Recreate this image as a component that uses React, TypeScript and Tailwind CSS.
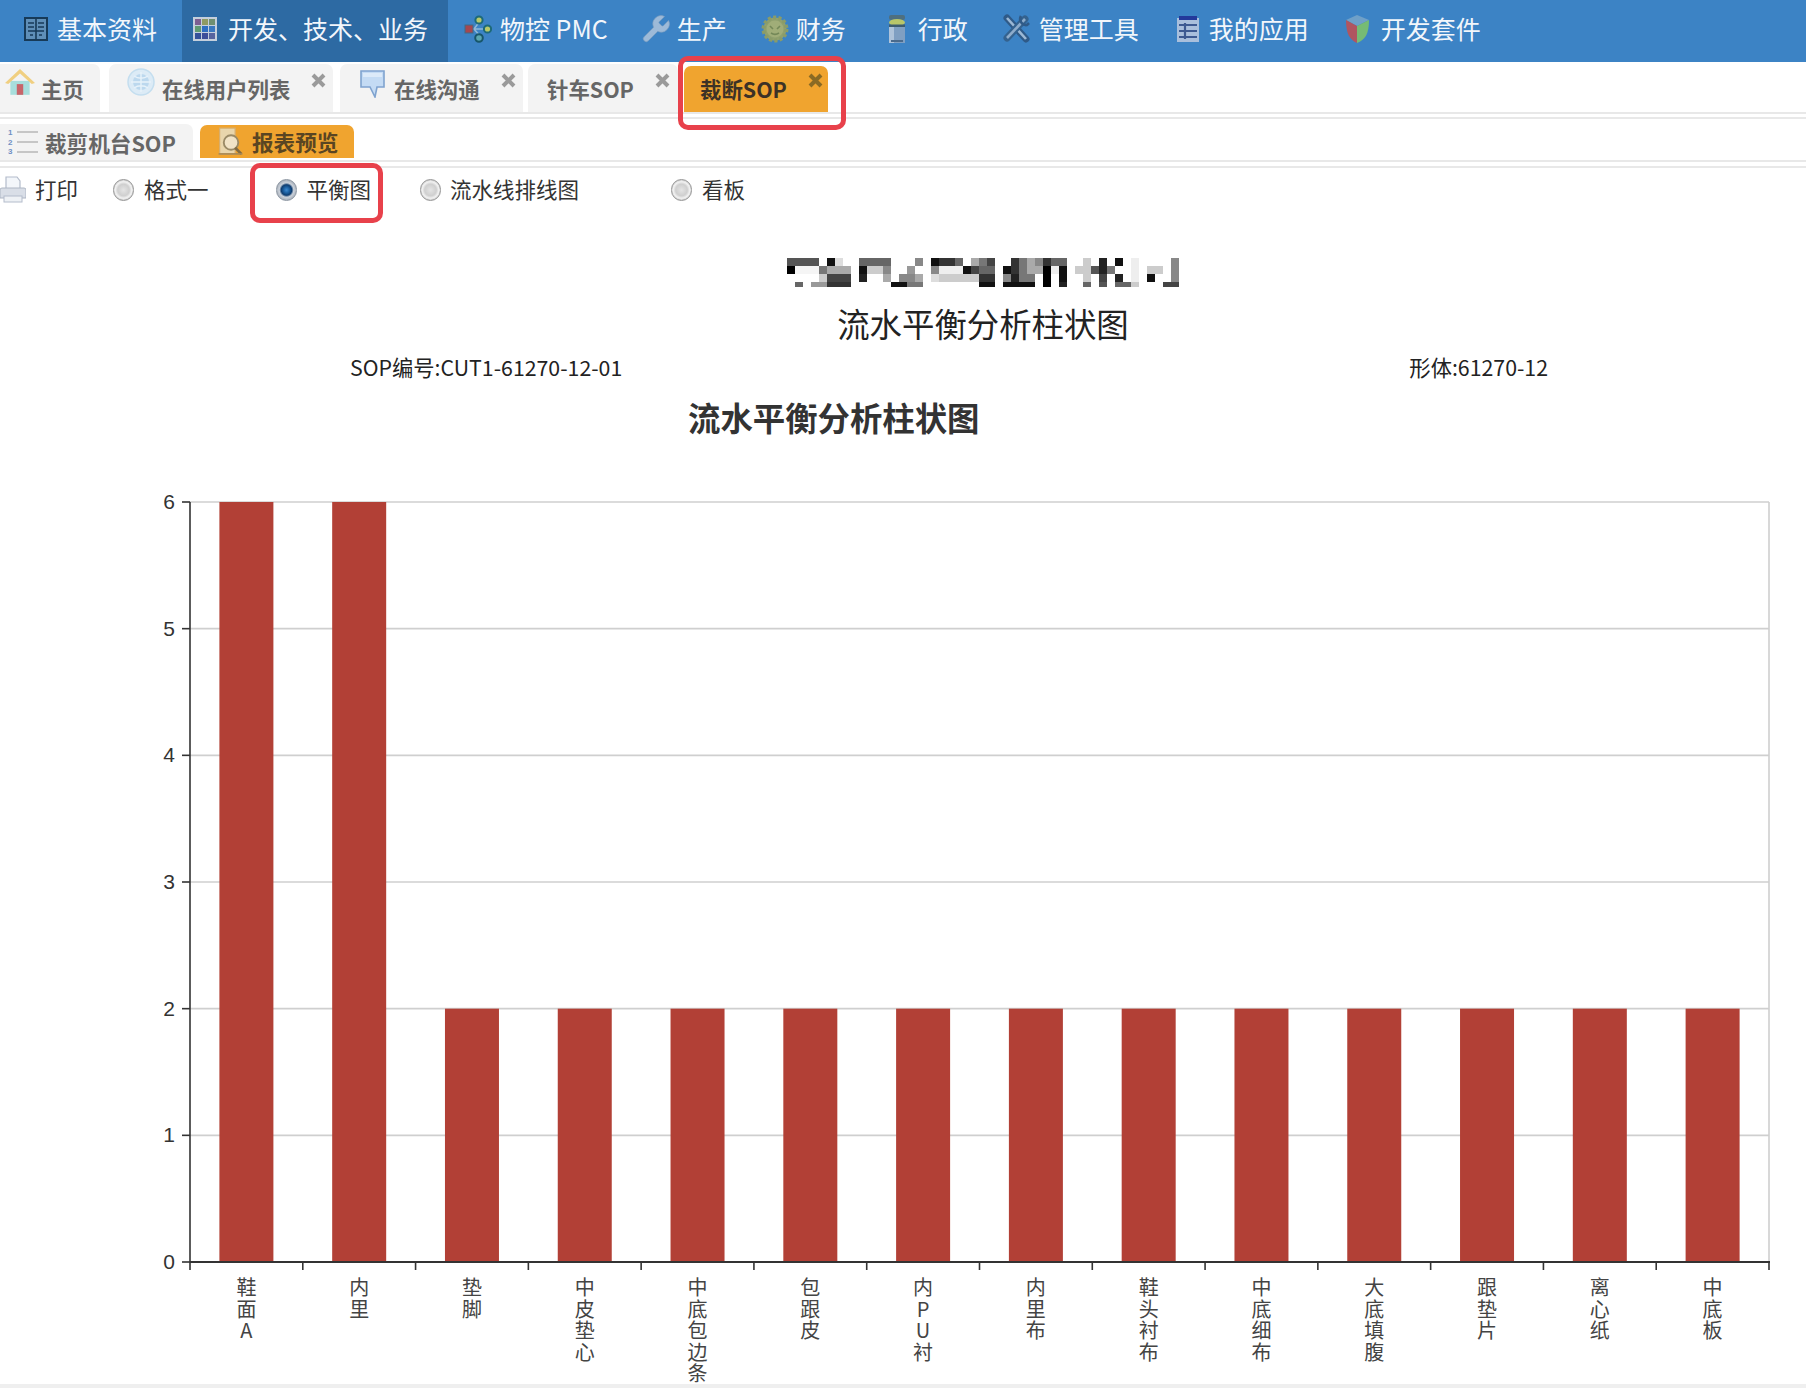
import type { ReactNode } from "react";

const BookIcon = () => (
  <svg width="24" height="24" viewBox="0 0 24 24">
    <rect x="1" y="1" width="22" height="22" fill="#5f8fb8" stroke="#173a58" strokeWidth="2" />
    <path d="M12 2v20M4 6h6M14 6h6M4 10h6M14 10h6M4 14h16M6 18h3M15 18h3" stroke="#173a58" strokeWidth="1.6" />
  </svg>
);

const GridIcon = () => {
  const cells = ["#7c5f92", "#8f9a62", "#6f8f72", "#5f9a72", "#2f6fc0", "#3a78c0", "#34509a", "#3d4f9a", "#56649f"];
  return (
    <svg width="24" height="24" viewBox="0 0 24 24">
      <rect x="0" y="0" width="24" height="24" fill="#c4cfdc" />
      {cells.map((c, i) => (
        <rect key={i} x={2 + (i % 3) * 7} y={2 + Math.floor(i / 3) * 7} width="6" height="6" fill={c} />
      ))}
    </svg>
  );
};

const NodesIcon = () => (
  <svg width="28" height="28" viewBox="0 0 28 28">
    <path d="M7 14h14M10 14l6-8M10 14l7 8" stroke="#8fb9d8" strokeWidth="1.5" fill="none" />
    <rect x="1" y="10" width="8" height="8" fill="#a5474f" stroke="#406a86" />
    <circle cx="15" cy="5" r="3.6" fill="#b7c96a" stroke="#1d6a78" strokeWidth="2" />
    <circle cx="23.5" cy="14" r="3.6" fill="#b7c96a" stroke="#1d6a78" strokeWidth="2" />
    <circle cx="15" cy="23" r="3.8" fill="#5aa7b0" stroke="#17566a" strokeWidth="2" />
  </svg>
);

const WrenchIcon = () => (
  <svg width="28" height="28" viewBox="2 1.5 20.5 20.5">
    <path
      d="M14.7 6.3a1 1 0 0 0 0 1.4l1.6 1.6a1 1 0 0 0 1.4 0l3.77-3.77a6 6 0 0 1-7.94 7.94l-6.91 6.91a2.12 2.12 0 0 1-3-3l6.91-6.91a6 6 0 0 1 7.94-7.94l-3.76 3.76z"
      fill="#9dbad8"
      stroke="#7f9fc0"
      strokeWidth="0.5"
    />
  </svg>
);

const GearIcon = () => (
  <svg width="28" height="28" viewBox="0 0 28 28">
    <circle cx="14" cy="14" r="11.5" fill="#90a06e" stroke="#8a9c68" strokeWidth="4" strokeDasharray="3 2.2" />
    <circle cx="14" cy="14" r="8.5" fill="#a0ad78" />
    <path d="M9 11l3 3M19 11l-3 3M10 18c3 2 5 2 8 0" stroke="#748858" strokeWidth="1.6" fill="none" />
  </svg>
);

const DrumIcon = () => (
  <svg width="20" height="30" viewBox="0 0 20 30">
    <rect x="2" y="12" width="16" height="17" fill="#7f9fc2" />
    <rect x="2" y="12" width="5" height="17" fill="#aec3da" />
    <rect x="2" y="1" width="16" height="5" rx="2" fill="#4e6f80" />
    <ellipse cx="10" cy="8.5" rx="8" ry="3.5" fill="#b8c66a" />
    <rect x="2" y="10.5" width="16" height="2.5" fill="#3d5c70" />
    <rect x="4" y="26" width="12" height="2" fill="#4a6a8c" />
  </svg>
);

const ToolsIcon = () => (
  <svg width="29" height="29" viewBox="0 0 29 29" fill="none">
    <path d="M5 4l19 21" stroke="#2f5a88" strokeWidth="7" strokeLinecap="round" />
    <path d="M5 4l19 21" stroke="#9cb8d4" strokeWidth="2.6" />
    <path d="M23 5L5 24" stroke="#34628f" strokeWidth="7" strokeLinecap="round" />
    <path d="M23 5L5 24" stroke="#8eaccb" strokeWidth="2.6" />
    <path d="M19 2a6 6 0 0 0 6 9l2-2" stroke="#2f5a88" strokeWidth="2.6" />
  </svg>
);

const AppCardIcon = () => (
  <svg width="24" height="28" viewBox="0 0 24 28">
    <rect x="1" y="3" width="22" height="24" fill="#a9bfdc" />
    <rect x="3" y="1" width="18" height="4" fill="#23399b" />
    <path d="M3 10h18M3 16h18M3 22h18M9 8v16" stroke="#3d5a92" strokeWidth="2.2" />
  </svg>
);

const CubeIcon = () => (
  <svg width="27" height="30" viewBox="0 0 27 30">
    <path d="M2 6l11-5 12 5-12 6z" fill="#6fa0c8" />
    <path d="M2 6l11 6v17C6 26 2 20 2 6z" fill="#b05560" />
    <path d="M25 6l-12 6v17c8-3 12-9 12-23z" fill="#76bb74" />
  </svg>
);

const HomeIcon = () => (
  <svg width="30" height="27" viewBox="0 0 28 25">
    <path d="M5 11h18v13H5z" fill="#a8dedc" />
    <rect x="11" y="14" width="6" height="10" fill="#c8656a" />
    <path d="M0 13L14 0l14 13-3 1L14 4 3 14z" fill="#f0cf80" />
  </svg>
);

const GlobeIcon = () => (
  <svg width="28" height="28" viewBox="0 0 28 28" fill="none">
    <circle cx="14" cy="14" r="13" fill="#dcebf6" stroke="#c4deef" strokeWidth="1.5" />
    <circle cx="14" cy="14" r="8" fill="#bcd8ee" />
    <path d="M14 4v20M4 14h20M7 8c4 3 10 3 14 0M7 20c4-3 10-3 14 0" stroke="#e7f2fa" strokeWidth="1.4" />
  </svg>
);

const BubbleIcon = () => (
  <svg width="25" height="29" viewBox="0 0 25 29">
    <path d="M1 2h23v16h-7l-2 10-5-10H1z" fill="#c4dbf4" stroke="#7fa3cf" strokeWidth="1.6" />
    <path d="M3 4h19v4H3z" fill="#dceaf9" />
  </svg>
);

const ListIcon = () => (
  <svg width="30" height="30" viewBox="0 0 30 30">
    <text x="0" y="8" fontSize="8" fontWeight="700" fill="#6f8fc4" fontFamily="Liberation Sans, sans-serif">1</text>
    <text x="0" y="18" fontSize="8" fontWeight="700" fill="#6f8fc4" fontFamily="Liberation Sans, sans-serif">2</text>
    <text x="0" y="27" fontSize="8" fontWeight="700" fill="#6f8fc4" fontFamily="Liberation Sans, sans-serif">3</text>
    <path d="M9 5h21M9 15h21M9 25h21" stroke="#b8b8b8" strokeWidth="1.6" />
  </svg>
);

const ReportIcon = () => (
  <svg width="27" height="29" viewBox="0 0 25 28" fill="none">
    <path d="M2 1h15v25H2z" fill="#e9d6ac" stroke="#d8ae6c" strokeWidth="1.2" />
    <circle cx="13" cy="15" r="7" fill="#f1e3c6" stroke="#9a8a66" strokeWidth="1.8" />
    <path d="M17 20l6 6" stroke="#806a42" strokeWidth="2.6" />
    <path d="M1 26h23" stroke="#a88a56" strokeWidth="1.6" />
  </svg>
);

const PrinterIcon = () => (
  <svg width="26" height="27" viewBox="0 0 26 27">
    <path d="M6 1h11l3 4v8H6z" fill="#f3f6fa" stroke="#b4bccb" strokeWidth="1.2" />
    <path d="M2 12h22a2 2 0 0 1 2 2v8H0v-8a2 2 0 0 1 2-2z" fill="#d9dee7" stroke="#aeb6c4" />
    <rect x="4" y="20" width="18" height="6" fill="#eef1f5" stroke="#b4bccb" />
  </svg>
);

const CloseMark = ({ color = "#9a9a9a" }: { color?: string }) => (
  <svg width="15" height="15" viewBox="0 0 15 15">
    <path d="M2 2l11 11M13 2L2 13" stroke={color} strokeWidth="4" />
  </svg>
);

const navItems: { label: string; icon: ReactNode; cls: string }[] = [
  { label: "基本资料", icon: <BookIcon />, cls: "ml-[24px] gap-[9px]" },
  { label: "开发、技术、业务", icon: <GridIcon />, cls: "ml-[25px] w-[266px] pl-[11px] gap-[11px] bg-[#2d6aa3]" },
  { label: "物控 PMC", icon: <NodesIcon />, cls: "ml-[16px] gap-[8px]" },
  { label: "生产", icon: <WrenchIcon />, cls: "ml-[34px] gap-[7px]" },
  { label: "财务", icon: <GearIcon />, cls: "ml-[34px] gap-[7px]" },
  { label: "行政", icon: <DrumIcon />, cls: "ml-[41px] gap-[11px]" },
  { label: "管理工具", icon: <ToolsIcon />, cls: "ml-[34px] gap-[8px]" },
  { label: "我的应用", icon: <AppCardIcon />, cls: "ml-[37px] gap-[9px]" },
  { label: "开发套件", icon: <CubeIcon />, cls: "ml-[35px] gap-[10px]" },
];

const mosaic: [number, number, number, string][] = [
  [0, 24, 120, "#555"], [0, 144, 168, "#111"], [0, 168, 192, "#ddd"], [0, 240, 336, "#666"], [0, 408, 432, "#888"],
  [0, 456, 480, "#111"], [0, 480, 528, "#333"], [0, 528, 552, "#666"], [0, 576, 600, "#aaa"], [0, 600, 624, "#777"],
  [0, 624, 648, "#444"], [0, 696, 720, "#333"], [0, 720, 744, "#777"], [0, 744, 768, "#aaa"], [0, 768, 792, "#888"],
  [0, 792, 816, "#333"], [0, 816, 864, "#666"], [0, 912, 936, "#ccc"], [0, 960, 984, "#222"], [0, 1008, 1032, "#111"],
  [0, 1056, 1080, "#eee"], [0, 1176, 1200, "#888"],
  [1, 24, 48, "#000"], [1, 48, 120, "#f5f5f5"], [1, 120, 144, "#777"], [1, 144, 216, "#aaa"], [1, 240, 264, "#111"],
  [1, 264, 312, "#ccc"], [1, 312, 336, "#888"], [1, 384, 408, "#999"], [1, 456, 480, "#888"], [1, 480, 552, "#eee"],
  [1, 552, 576, "#111"], [1, 576, 600, "#444"], [1, 600, 648, "#666"], [1, 672, 696, "#111"], [1, 696, 720, "#333"],
  [1, 720, 744, "#777"], [1, 744, 792, "#aaa"], [1, 792, 816, "#000"], [1, 816, 840, "#eee"], [1, 840, 864, "#111"],
  [1, 888, 936, "#ccc"], [1, 936, 960, "#555"], [1, 960, 984, "#222"], [1, 984, 1008, "#777"], [1, 1056, 1080, "#eee"],
  [1, 1104, 1152, "#ccc"], [1, 1176, 1200, "#888"],
  [2, 120, 144, "#ccc"], [2, 144, 216, "#444"], [2, 240, 264, "#222"], [2, 312, 336, "#aaa"], [2, 360, 408, "#888"],
  [2, 408, 432, "#aaa"], [2, 456, 480, "#ddd"], [2, 480, 600, "#ccc"], [2, 600, 648, "#333"], [2, 672, 696, "#888"],
  [2, 696, 720, "#222"], [2, 720, 768, "#777"], [2, 792, 816, "#000"], [2, 840, 864, "#111"], [2, 912, 936, "#ccc"],
  [2, 960, 984, "#444"], [2, 1008, 1032, "#222"], [2, 1056, 1080, "#eee"], [2, 1104, 1128, "#111"], [2, 1176, 1200, "#888"],
  [3, 48, 72, "#666"], [3, 96, 144, "#999"], [3, 144, 216, "#333"], [3, 336, 384, "#111"], [3, 384, 432, "#777"],
  [3, 600, 648, "#111"], [3, 672, 768, "#111"], [3, 792, 816, "#000"], [3, 840, 864, "#222"], [3, 912, 936, "#666"],
  [3, 960, 984, "#555"], [3, 1008, 1056, "#666"], [3, 1056, 1080, "#ccc"], [3, 1152, 1200, "#444"],
];

const chartData: { name: string; value: number }[] = [
  { name: "鞋面A", value: 6 },
  { name: "内里", value: 6 },
  { name: "垫脚", value: 2 },
  { name: "中皮垫心", value: 2 },
  { name: "中底包边条", value: 2 },
  { name: "包跟皮", value: 2 },
  { name: "内PU衬", value: 2 },
  { name: "内里布", value: 2 },
  { name: "鞋头衬布", value: 2 },
  { name: "中底细布", value: 2 },
  { name: "大底填腹", value: 2 },
  { name: "跟垫片", value: 2 },
  { name: "离心纸", value: 2 },
  { name: "中底板", value: 2 },
];

function BalanceChart() {
  const left = 190;
  const right = 1769;
  const top = 502;
  const bottom = 1262;
  const step = (right - left) / chartData.length;
  const unit = (bottom - top) / 6;

  return (
    <svg width="1806" height="830" viewBox="0 442 1806 830" className="block shrink-0">
      {[1, 2, 3, 4, 5, 6].map((v) => (
        <line key={v} x1={left} x2={right} y1={bottom - v * unit} y2={bottom - v * unit} stroke="#cfcfcf" strokeWidth="1.6" />
      ))}
      <line x1={right} x2={right} y1={top} y2={bottom} stroke="#cfcfcf" strokeWidth="1.6" />
      {chartData.map((d, i) => (
        <rect key={d.name} x={left + step * (i + 0.5) - 27} y={bottom - d.value * unit} width="54" height={d.value * unit} fill="#b24036" />
      ))}
      <line x1={left} x2={left} y1={top} y2={bottom + 8} stroke="#333" strokeWidth="1.6" />
      <line x1={left} x2={right + 1} y1={bottom} y2={bottom} stroke="#333" strokeWidth="2" />
      {[0, 1, 2, 3, 4, 5, 6].map((v) => (
        <g key={v}>
          <line x1={left - 8} x2={left} y1={bottom - v * unit} y2={bottom - v * unit} stroke="#333" strokeWidth="1.6" />
          <text x={175} y={bottom - v * unit + 7} textAnchor="end" fontSize="21" fill="#333" fontFamily="Liberation Sans, sans-serif">
            {v}
          </text>
        </g>
      ))}
      {chartData.map((_, i) => (
        <line key={i} x1={left + step * (i + 1)} x2={left + step * (i + 1)} y1={bottom} y2={bottom + 8} stroke="#333" strokeWidth="1.6" />
      ))}
    </svg>
  );
}

const Radio = ({ checked = false }: { checked?: boolean }) => (
  <span
    className={
      checked
        ? "block w-[21px] h-[22px] rounded-full border border-[#8a94a0] bg-[radial-gradient(circle,#3e8ad0_0%,#1c5f9f_22%,#0f3d70_38%,#ccd2da_52%,#8a94a0_92%)]"
        : "block w-[21px] h-[22px] rounded-full border border-[#959595] bg-[radial-gradient(circle,#e4e4e4_0%,#cfcfcf_42%,#f2f2f2_60%,#979797_95%)]"
    }
  />
);

export default function App() {
  return (
    <div className="relative flex flex-col w-[1806px] h-[1388px] overflow-hidden bg-white text-[#333] font-['Noto_Sans_CJK_SC','Noto_Sans',sans-serif]">
      <div className="flex h-[62px] shrink-0 bg-[#3c83c5] text-[25px] text-[#f2f6fb]">
        {navItems.map((item) => (
          <div key={item.label} className={`flex items-center h-full pb-[5px] whitespace-nowrap ${item.cls}`}>
            {item.icon}
            <span>{item.label}</span>
          </div>
        ))}
      </div>

      <div className="flex h-[50px] shrink-0 text-[21.4px] font-bold text-[#666]">
        <div className="flex items-center mt-[2px] w-[100px] rounded-tr-[7px] bg-[#f3f3f3] pl-[5px] gap-[6px]">
          <span className="-mt-[12px]"><HomeIcon /></span>
          <span className="mt-[3px]">主页</span>
        </div>
        <div className="relative flex items-center mt-[2px] ml-[9px] w-[224px] rounded-t-[7px] bg-[#f3f3f3] pl-[18px] gap-[7px]">
          <span className="-mt-[12px]"><GlobeIcon /></span>
          <span className="mt-[2px]">在线用户列表</span>
          <span className="absolute top-[9px] right-[7px]"><CloseMark /></span>
        </div>
        <div className="relative flex items-center mt-[2px] ml-[7px] w-[183px] rounded-t-[7px] bg-[#f3f3f3] pl-[20px] gap-[9px]">
          <span className="-mt-[10px]"><BubbleIcon /></span>
          <span className="mt-[2px]">在线沟通</span>
          <span className="absolute top-[9px] right-[7px]"><CloseMark /></span>
        </div>
        <div className="relative flex items-center mt-[2px] ml-[5px] w-[150px] rounded-t-[7px] bg-[#f3f3f3] pl-[19px]">
          <span className="mt-[2px]">针车SOP</span>
          <span className="absolute top-[9px] right-[8px]"><CloseMark /></span>
        </div>
        <div className="relative flex items-center mt-[4px] ml-[6px] w-[144px] rounded-t-[7px] bg-[#f0a42f] pl-[16px] text-[#3d3226]">
          <span>裁断SOP</span>
          <span className="absolute top-[7px] right-[5px]"><CloseMark color="#8a6a24" /></span>
        </div>
      </div>
      <div className="h-[2px] shrink-0 bg-[#e8e8e8]" />
      <div className="h-[3px] shrink-0" />
      <div className="h-[2px] shrink-0 bg-[#e8e8e8]" />

      <div className="flex h-[41px] shrink-0 text-[21.6px] font-bold text-[#666]">
        <div className="flex items-center mt-[5px] w-[193px] rounded-tr-[7px] bg-[#f3f3f3] pl-[8px] gap-[7px]">
          <ListIcon />
          <span className="mt-[2px]">裁剪机台SOP</span>
        </div>
        <div className="flex items-center mt-[6px] mb-[2px] ml-[7px] w-[154px] rounded-t-[7px] bg-[#f0a42f] pl-[17px] gap-[8px] text-[#5a4522]">
          <ReportIcon />
          <span className="mt-[1px]">报表预览</span>
        </div>
      </div>
      <div className="h-[2px] shrink-0 bg-[#e8e8e8]" />
      <div className="h-[4px] shrink-0" />
      <div className="h-[2px] shrink-0 bg-[#e8e8e8]" />

      <div className="flex items-center h-[44px] pb-[1px] shrink-0 text-[21.5px] text-[#333]">
        <PrinterIcon />
        <span className="ml-[9px]">打印</span>
        <span className="ml-[35px]"><Radio /></span>
        <span className="ml-[10px]">格式一</span>
        <span className="ml-[67px]"><Radio checked /></span>
        <span className="ml-[10px]">平衡图</span>
        <span className="ml-[49px]"><Radio /></span>
        <span className="ml-[9px]">流水线排线图</span>
        <span className="ml-[92px]"><Radio /></span>
        <span className="ml-[10px]">看板</span>
      </div>

      <div className="flex flex-col items-center mt-[46px] pl-[160px] shrink-0">
        <svg width="392" height="30" viewBox="24 24 1176 90" preserveAspectRatio="none" className="block" shapeRendering="crispEdges">
          {mosaic.map(([row, x1, x2, fill], i) => (
            <rect key={i} x={x1} y={24 + row * 24} width={x2 - x1} height={row === 3 ? 14 : 24} fill={fill} />
          ))}
        </svg>
        <div className="mt-[13px] h-[44px] leading-[44px] text-[32.4px] text-[#222]">流水平衡分析柱状图</div>
      </div>

      <div className="flex justify-between mt-[7px] h-[30px] leading-[30px] pl-[350px] pr-[258px] shrink-0 text-[21.3px] text-[#222]">
        <span>SOP编号:CUT1-61270-12-01</span>
        <span>形体:61270-12</span>
      </div>

      <div className="mt-[13px] mb-[3px] ml-[688px] h-[44px] leading-[44px] shrink-0 text-[32.4px] font-bold text-[#333]">流水平衡分析柱状图</div>

      <BalanceChart />
      <div className="flex h-[112px] shrink-0 pl-[190px] pt-[4px] text-[20px] leading-[21.6px] text-[#444]">
        {chartData.map((d) => (
          <div key={d.name} className="flex justify-center w-[112.786px]">
            <span className="block w-[22px] text-center break-all">{d.name}</span>
          </div>
        ))}
      </div>
      <div className="h-[4px] shrink-0 bg-[#efefef]" />

      <div className="absolute left-[678px] top-[56px] w-[168px] h-[74px] rounded-[10px] border-[5px] border-[#e8414b]" />
      <div className="absolute left-[250px] top-[163px] w-[133px] h-[60px] rounded-[10px] border-[5px] border-[#e8414b]" />
    </div>
  );
}
